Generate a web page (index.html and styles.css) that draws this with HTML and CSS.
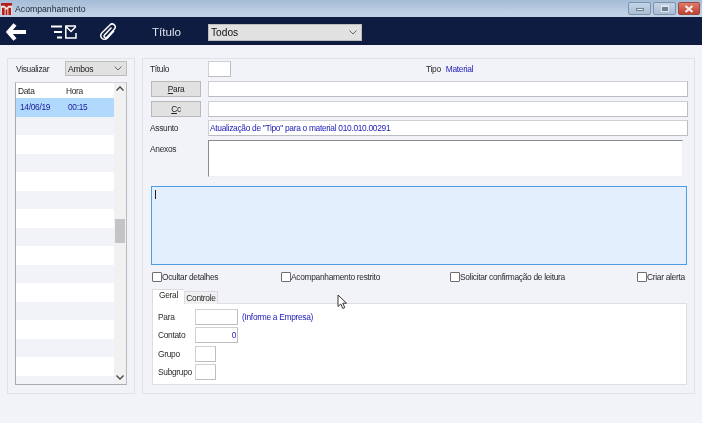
FILE: index.html
```html
<!DOCTYPE html>
<html lang="pt">
<head>
<meta charset="utf-8">
<title>Acompanhamento</title>
<link rel="stylesheet" href="styles.css">
</head>
<body>
<div class="window">
  <header class="titlebar">
    <svg class="app-icon" width="11" height="12" viewBox="0 0 12 13"><rect width="12" height="13" fill="#f6e9e4"/><path d="M0 0h12v3H8L6 5 4 3H0zM1 5h3v8H1zM5 7h2v6H5zM8 5h3v8H8z" fill="#b3201c"/></svg>
    <span class="title-text">Acompanhamento</span>
    <div class="win-buttons">
      <span class="win-btn"><i class="glyph-min"></i></span>
      <span class="win-btn"><i class="glyph-max"></i></span>
      <span class="win-btn close"><svg width="10" height="8" viewBox="0 0 10 8"><path d="M1.500 1l7 6M8.500 1l-7 6" stroke="#f4eeee" stroke-width="2.200"/></svg></span>
    </div>
  </header>
  <nav class="toolbar">
    <svg class="ico-back" width="20" height="18" viewBox="0 0 20 18"><path d="M9 1.500L2.500 9 9 16.500M3 9H20" fill="none" stroke="#fff" stroke-width="4"/></svg>
    <svg class="ico-list" width="26" height="14" viewBox="0 0 26 14"><path d="M0 1.500h11M3 7h8M6 12.500h5" stroke="#fff" stroke-width="1.800" fill="none"/><path d="M25 1H14.800v12H25V8M15 1.500l5 5 5-5" stroke="#fff" stroke-width="1.500" fill="none"/></svg>
    <svg class="ico-clip" width="18" height="18" viewBox="0 0 18 18"><path d="M12.500 4.500L5.500 12a1.600 1.600 0 0 0 2.400 2.200l7.400-8a3 3 0 0 0-4.400-4.200L2.800 10a3.700 3.700 0 0 0 5.400 5.200L15 8" fill="none" stroke="#fff" stroke-width="1.500"/></svg>
    <span class="tool-label">Título</span>
    <div class="select select-todos"><span>Todos</span><svg width="8" height="5" viewBox="0 0 8 5"><path d="M.5.5L4 4 7.500.5" fill="none" stroke="#666"/></svg></div>
  </nav>
  <main class="content">
    <aside class="panel panel-left">
      <div class="view-row">
        <span class="view-label">Visualizar</span>
        <div class="select select-ambos"><span>Ambos</span><svg width="8" height="5" viewBox="0 0 8 5"><path d="M.5.5L4 4 7.500.5" fill="none" stroke="#666"/></svg></div>
      </div>
      <div class="list">
        <div class="list-main">
          <div class="list-head"><span class="col-a">Data</span><span class="col-b">Hora</span></div>
          <div class="list-row selected"><span class="col-a">14/06/19</span><span class="col-b">00:15</span></div>
          <div class="list-row alt"></div><div class="list-row"></div>
          <div class="list-row alt"></div><div class="list-row"></div>
          <div class="list-row alt"></div><div class="list-row"></div>
          <div class="list-row alt"></div><div class="list-row"></div>
          <div class="list-row alt"></div><div class="list-row"></div>
          <div class="list-row alt"></div><div class="list-row"></div>
          <div class="list-row alt"></div><div class="list-row"></div>
          <div class="list-row alt"></div>
        </div>
        <div class="scrollbar">
          <svg class="sb-arrow" width="8" height="5" viewBox="0 0 8 5"><path d="M.5 4.500L4 1l3.500 3.500" fill="none" stroke="#444" stroke-width="1.300"/></svg>
          <div class="sb-thumb"></div>
          <svg class="sb-arrow" width="8" height="5" viewBox="0 0 8 5"><path d="M.5.5L4 4l3.500-3.500" fill="none" stroke="#444" stroke-width="1.300"/></svg>
        </div>
      </div>
    </aside>
    <section class="panel panel-right">
      <div class="row row-first">
        <label class="lbl">Título</label>
        <div class="field f-23"></div>
        <span class="tipo-label">Tipo</span><span class="value tipo-value">Material</span>
      </div>
      <div class="row row-para">
        <button class="btn"><u>P</u>ara</button>
        <div class="field grow"></div>
      </div>
      <div class="row row-cc">
        <button class="btn"><u>C</u>c</button>
        <div class="field grow"></div>
      </div>
      <div class="row row-assunto">
        <label class="lbl">Assunto</label>
        <div class="field grow value">Atualização de "Tipo" para o material 010.010.00291</div>
      </div>
      <div class="row row-anexos">
        <label class="lbl">Anexos</label>
        <div class="anexos"></div>
      </div>
      <div class="editor"><i class="caret"></i></div>
      <div class="checks">
        <label class="check c1"><i class="box"></i>Ocultar detalhes</label>
        <label class="check c2"><i class="box"></i>Acompanhamento restrito</label>
        <label class="check c3"><i class="box"></i>Solicitar confirmação de leitura</label>
        <label class="check c4"><i class="box"></i>Criar alerta</label>
      </div>
      <div class="tabs">
        <span class="tab active">Geral</span><span class="tab">Controle</span>
      </div>
      <div class="tab-panel">
        <div class="tp-row"><label class="tp-lbl">Para</label><div class="field f-43"></div><span class="value hint">(Informe a Empresa)</span></div>
        <div class="tp-row"><label class="tp-lbl">Contato</label><div class="field f-43 num value">0</div></div>
        <div class="tp-row"><label class="tp-lbl">Grupo</label><div class="field f-21"></div></div>
        <div class="tp-row"><label class="tp-lbl">Subgrupo</label><div class="field f-21"></div></div>
      </div>
    </section>
  </main>
  <svg class="cursor" width="11" height="16" viewBox="0 0 11 16"><path d="M1 1v11.500l2.800-2.500 2 4.500 2-.9-2-4.400h3.700z" fill="#fff" stroke="#333" stroke-width="1"/></svg>
</div>
</body>
</html>
```
FILE: styles.css
```css
* { box-sizing: border-box; }
html, body { margin: 0; padding: 0; }
body {
  font-family: "Liberation Sans", Arial, sans-serif;
  font-size: 8.400px;
  letter-spacing: -0.300px;
  color: #2b2b2b;
  overflow: hidden;
}
.window {
  position: relative;
  width: 702px;
  height: 423px;
  background: #f2f3f9;
  display: flex;
  flex-direction: column;
  filter: blur(0.25px);
}
.titlebar {
  height: 17px;
  flex: none;
  display: flex;
  align-items: center;
  padding-left: 1px;
  background: linear-gradient(#a4bcd6, #bccfe4 70%, #c2d3e6);
}
.app-icon { margin-right: 3px; margin-top: 1px; }
.title-text { font-size: 8.700px; letter-spacing: 0; color: #1c2530; }
.win-buttons {
  margin-left: auto;
  margin-right: 2px;
  align-self: flex-start;
  margin-top: 2px;
  display: flex;
  gap: 2px;
}
.win-btn {
  width: 23px;
  height: 13px;
  border: 1px solid #7d93ab;
  border-radius: 2px;
  background: linear-gradient(#c4d4e6, #a8bdd4);
  display: flex;
  align-items: center;
  justify-content: center;
}
.win-btn.close {
  width: 22px;
  background: linear-gradient(#dc7c6b, #c43f2e);
  border-color: #9a4a40;
}
.glyph-min { width: 8px; height: 3px; background: #e8edf2; border: 1px solid #6f7f90; margin-top: 2px; }
.glyph-max { width: 8px; height: 7px; background: #6f7f90; border: 1px solid #e0e6ee; border-top-width: 2px; }
.toolbar {
  height: 28px;
  flex: none;
  display: flex;
  align-items: center;
  padding-top: 3px;
  background: #0f1c42;
  border-bottom: 1px solid #101a38;
}
.ico-back { margin-left: 6px; }
.ico-list { margin-left: 25px; }
.ico-clip { margin-left: 22px; margin-top: -1px; }
.tool-label {
  margin: 0 0 2px 35px;
  width: 56px;
  font-size: 11.600px;
  letter-spacing: 0;
  color: #dfe3ec;
}
.select {
  background: #e1e1e1;
  border: 1px solid #bdbdbd;
  display: flex;
  align-items: center;
  justify-content: space-between;
  padding: 0 4px 0 2px;
}
.select-todos { width: 154px; height: 17px; font-size: 10.200px; letter-spacing: 0; color: #111; }
.select-ambos { width: 62px; height: 15px; color: #222; font-size: 8.600px; }
.content {
  flex: 1;
  min-height: 0;
  display: flex;
  gap: 7px;
  padding: 13px 7px 29px;
}
.panel { border: 1px solid #e1e2e6; min-height: 0; }
.panel-left {
  width: 128px;
  padding: 2px 7px 8px 7px;
  display: flex;
  flex-direction: column;
}
.view-row {
  display: flex;
  align-items: center;
  justify-content: space-between;
  height: 15px;
  flex: none;
  padding-left: 1px;
}
.view-label { padding-top: 1px; }
.list {
  margin-top: 6px;
  flex: 1;
  min-height: 0;
  width: 112px;
  border: 1px solid #b4b6bb;
  border-color: #d0d1d6 #b8b9be #a9aaae #a9aaae;
  display: flex;
  background: #f1f1f1;
}
.list-main { width: 98px; overflow: hidden; background: #fff; }
.list-head { height: 15px; display: flex; align-items: center; }
.list-row { height: 18.500px; display: flex; align-items: center; }
.list-row.alt { background: #f2f3f9; }
.list-row.selected { background: #b1d9fd; color: #20209a; }
.list-head .col-a { width: 50px; padding-left: 2px; }
.list-row .col-a { width: 52px; padding-left: 4px; }
.scrollbar {
  flex: 1;
  position: relative;
  display: flex;
  flex-direction: column;
  align-items: center;
  justify-content: space-between;
  padding: 3px 0 4px;
}
.sb-thumb {
  position: absolute;
  top: 136px;
  left: 1px;
  right: 1px;
  height: 24px;
  background: #c4c4c6;
}
.panel-right {
  flex: 1;
  padding: 2px 6px 8px 7px;
  display: flex;
  flex-direction: column;
}
.row { display: flex; align-items: center; flex: none; }
.row-first { height: 16px; }
.row-para { height: 16px; margin-top: 4px; }
.row-cc { height: 16px; margin-top: 4px; }
.row-assunto { height: 16px; margin-top: 3px; }
.row-anexos { height: 37px; margin-top: 4px; align-items: flex-start; }
.lbl { width: 58px; flex: none; }
.row-anexos .lbl { margin-top: 4px; }
.field {
  height: 16px;
  background: #fff;
  border: 1px solid #cfd0d4;
  border-bottom-color: #bcbdc1;
  border-right-color: #bcbdc1;
  display: flex;
  align-items: center;
  flex: none;
}
.field.grow { flex: 1; }
.f-23 { width: 23px; }
.f-43 { width: 43px; }
.f-21 { width: 21px; }
.value { color: #2222b8; }
.row-assunto .field { padding-left: 1px; }
.tipo-label { margin-left: 195px; }
.tipo-value { margin-left: 5px; }
.btn {
  width: 50px;
  height: 16px;
  margin: 0 7px 0 1px;
  padding: 0;
  background: #e1e1e1;
  border: 1px solid #b9b9b9;
  font: inherit;
  letter-spacing: inherit;
  color: #222;
}
.anexos {
  width: 475px;
  height: 37px;
  background: #fff;
  border: 1px solid #f0f0f2;
  border-top: 1px solid #8a8a8a;
  border-left: 1px solid #8a8a8a;
}
.editor {
  flex: none;
  margin: 9px 1px 0 1px;
  height: 79px;
  background: #e3effd;
  border: 1px solid #4a9de0;
  padding: 3px 3px;
}
.caret { display: block; width: 1px; height: 9px; background: #222; }
.checks {
  flex: none;
  margin-top: 6px;
  height: 12px;
  display: flex;
  padding-left: 2px;
}
.check { display: flex; align-items: center; flex: none; white-space: nowrap; }
.box {
  width: 10px;
  height: 10px;
  background: #fff;
  border: 1px solid #6e6e70;
  border-radius: 1px;
}
.c1 { width: 129px; }
.c2 { width: 169px; }
.c3 { width: 187px; }
.tabs {
  flex: none;
  margin: 6px 0 0 2px;
  height: 15px;
  display: flex;
  align-items: flex-end;
  position: relative;
  z-index: 1;
}
.tab {
  height: 13px;
  width: 34px;
  text-align: center;
  background: #f0f0f2;
  border: 1px solid #dcdcdf;
  border-bottom: 0;
  line-height: 12px;
}
.tab.active {
  width: 32px;
  height: 15px;
  background: #fff;
  border-right: 0;
  line-height: 11px;
}
.tab-panel {
  flex: none;
  margin: -1px 1px 0 2px;
  height: 82px;
  background: #fff;
  border: 1px solid #dfdfe2;
  padding: 5px 0 0 5px;
  display: flex;
  flex-direction: column;
  gap: 2.300px;
}
.tp-row { display: flex; align-items: center; }
.tp-lbl { width: 37px; flex: none; }
.hint { margin-left: 4px; }
.num { justify-content: flex-end; padding-right: 1px; }
.cursor {
  position: absolute;
  left: 337px;
  top: 294px;
}
```
